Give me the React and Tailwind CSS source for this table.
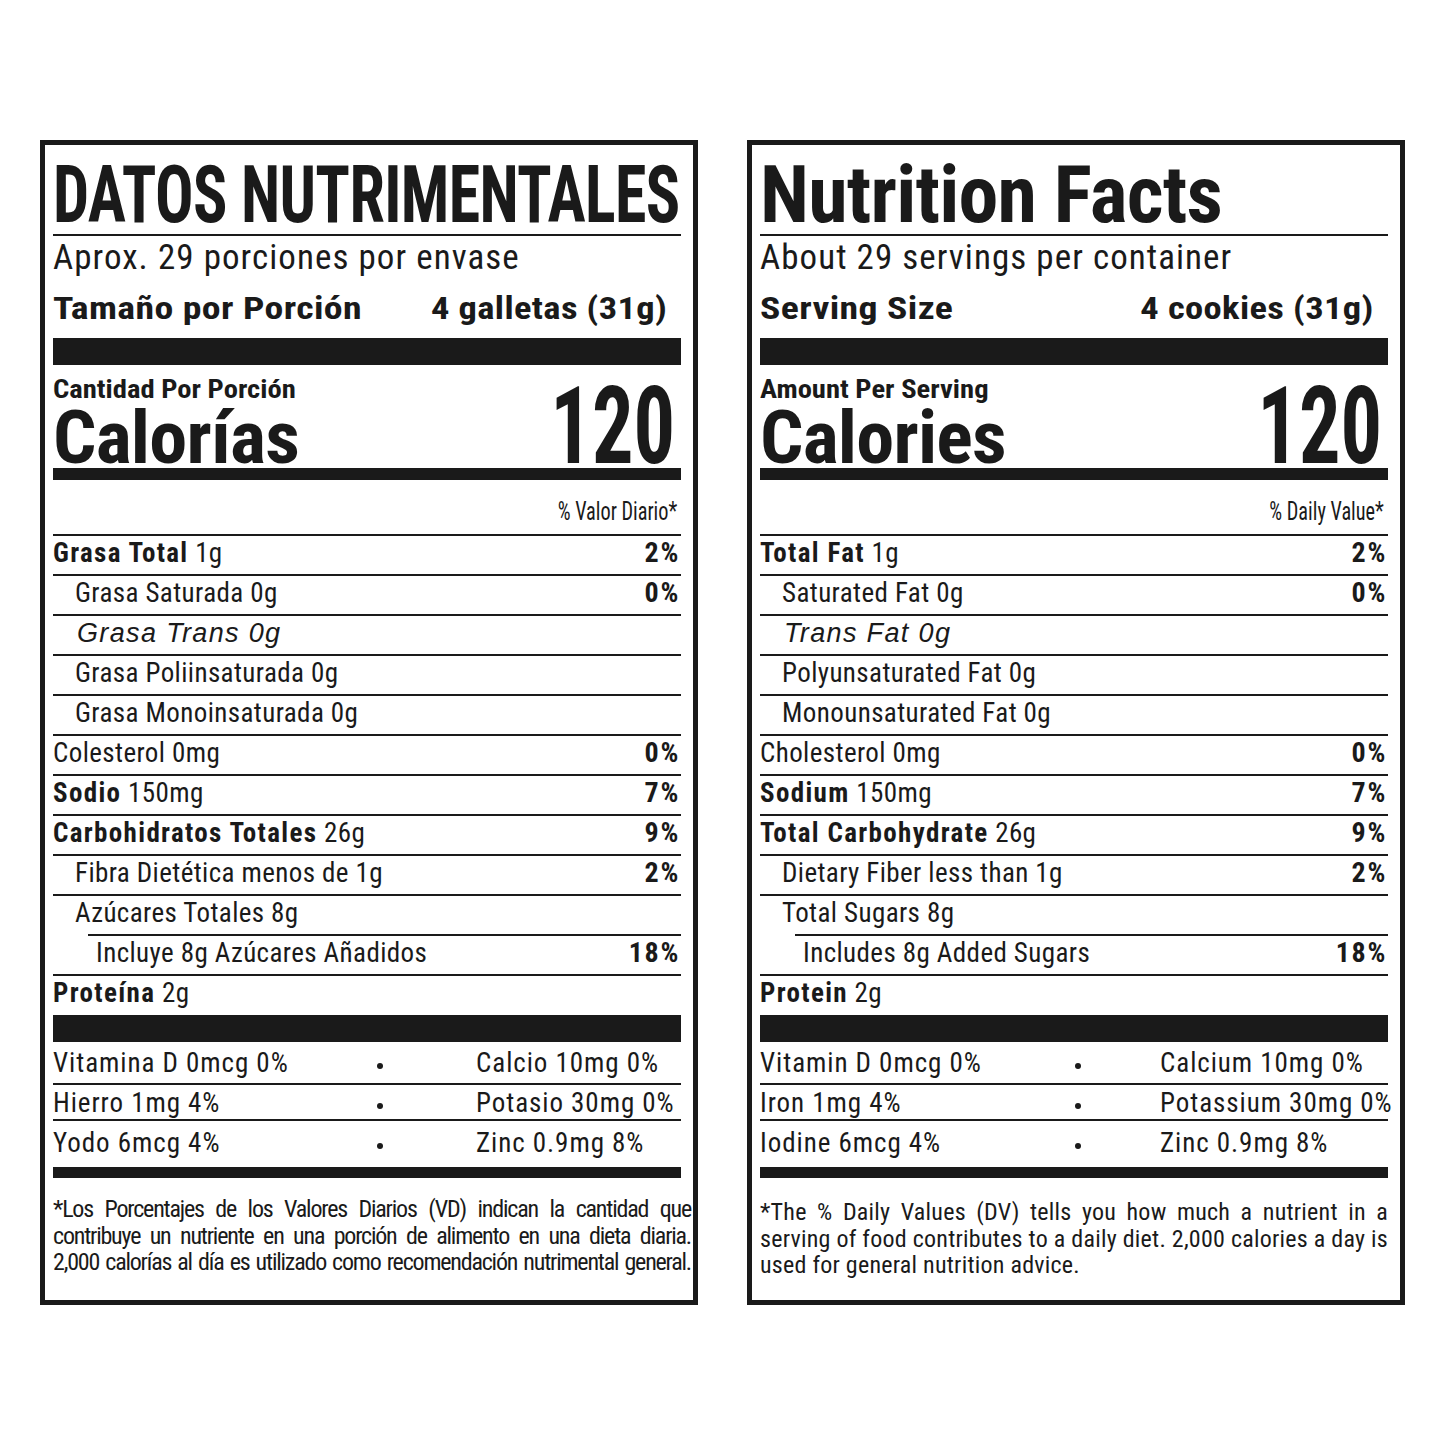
const INK = "text-[#1a1a1a]";
const RC = "font-['Roboto_Condensed',sans-serif]";

const es = {
  title: "DATOS NUTRIMENTALES",
  titleScale: "scale-x-[0.80]",
  servings: "Aprox. 29 porciones por envase",
  sizeLabel: "Tamaño por Porción",
  sizeValue: "4 galletas (31g)",
  amount: "Cantidad Por Porción",
  cal: "Calorías",
  dv: "% Valor Diario*",
  rows: [
    { b: "Grasa Total", r: " 1g", pct: "2%" },
    { r: "Grasa Saturada 0g", pct: "0%", ind: 1 },
    { r: "Grasa Trans 0g", ind: 1, it: true },
    { r: "Grasa Poliinsaturada 0g", ind: 1 },
    { r: "Grasa Monoinsaturada 0g", ind: 1 },
    { r: "Colesterol 0mg", pct: "0%" },
    { b: "Sodio", r: " 150mg", pct: "7%" },
    { b: "Carbohidratos Totales", r: " 26g", pct: "9%" },
    { r: "Fibra Dietética menos de 1g", pct: "2%", ind: 1 },
    { r: "Azúcares Totales 8g", ind: 1, lineInd: true },
    { r: "Incluye 8g Azúcares Añadidos", pct: "18%", ind: 2 },
    { b: "Proteína", r: " 2g" },
  ],
  vit: [
    ["Vitamina D 0mcg 0%", "Calcio 10mg 0%"],
    ["Hierro 1mg 4%", "Potasio 30mg 0%"],
    ["Yodo 6mcg 4%", "Zinc 0.9mg 8%"],
  ],
  colA: "w-[317px]",
  colC: "ml-[86px]",
  foot: [
    "*Los Porcentajes de los Valores Diarios (VD) indican la cantidad que",
    "contribuye un nutriente en una porción de alimento en una dieta diaria.",
    "2,000 calorías al día es utilizado como recomendación nutrimental general.",
  ],
  footLastJustify: true,
  footCls: "pt-[18px] tracking-[-0.05em] -mr-[10px]",
};

const en = {
  title: "Nutrition Facts",
  titleScale: "scale-x-100",
  servings: "About 29 servings per container",
  sizeLabel: "Serving Size",
  sizeValue: "4 cookies (31g)",
  amount: "Amount Per Serving",
  cal: "Calories",
  dv: "% Daily Value*",
  rows: [
    { b: "Total Fat", r: " 1g", pct: "2%" },
    { r: "Saturated Fat 0g", pct: "0%", ind: 1 },
    { r: "Trans Fat 0g", ind: 1, it: true },
    { r: "Polyunsaturated Fat 0g", ind: 1 },
    { r: "Monounsaturated Fat 0g", ind: 1 },
    { r: "Cholesterol 0mg", pct: "0%" },
    { b: "Sodium", r: " 150mg", pct: "7%" },
    { b: "Total Carbohydrate", r: " 26g", pct: "9%" },
    { r: "Dietary Fiber less than 1g", pct: "2%", ind: 1 },
    { r: "Total Sugars 8g", ind: 1, lineInd: true },
    { r: "Includes 8g Added Sugars", pct: "18%", ind: 2 },
    { b: "Protein", r: " 2g" },
  ],
  vit: [
    ["Vitamin D 0mcg 0%", "Calcium 10mg 0%"],
    ["Iron 1mg 4%", "Potassium 30mg 0%"],
    ["Iodine 6mcg 4%", "Zinc 0.9mg 8%"],
  ],
  colA: "w-[308px]",
  colC: "ml-[72px]",
  foot: [
    "*The % Daily Values (DV) tells you how much a nutrient in a",
    "serving of food contributes to a daily diet. 2,000 calories a day is",
    "used for general nutrition advice.",
  ],
  footLastJustify: false,
  footCls: "pt-[21px] tracking-[0.01em]",
};

function Row({ row, last }) {
  const pad = row.ind === 2 ? "pl-[43px]" : row.ind === 1 ? "pl-[22px]" : "pl-0";
  return (
    <>
      <div className={`${last ? "h-[39px]" : "h-[38px]"} flex justify-between ${pad} pr-[1px] whitespace-nowrap`}>
        {row.it ? (
          <span className="pl-[2px] font-['Liberation_Sans',sans-serif] italic text-[27px] leading-[34px] tracking-[0.05em]">{row.r}</span>
        ) : (
          <span className="text-[27px] leading-[34px] tracking-[0.015em]">
            {row.b && <b className="font-bold tracking-[0.05em]">{row.b}</b>}
            {row.r}
          </span>
        )}
        {row.pct && <span className="font-bold text-[28px] leading-[34px] tracking-[0.06em]">{row.pct}</span>}
      </div>
      {!last && <div className={`h-[2px] bg-[#1a1a1a] ${row.lineInd ? "ml-[35px]" : ""}`} />}
    </>
  );
}

function VitRow({ a, c, colA, colC, h, pt }) {
  return (
    <div className={`${h} ${pt} flex items-start text-[27px] leading-none tracking-[0.035em] whitespace-nowrap`}>
      <span className={`${colA} shrink-0`}>{a}</span>
      <span className="w-[20px] shrink-0 flex justify-center pt-[13px]">
        <span className="w-[6px] h-[6px] rounded-full bg-[#1a1a1a]" />
      </span>
      <span className={colC}>{c}</span>
    </div>
  );
}

function Panel({ d }) {
  return (
    <div className={`w-[658px] h-[1165px] border-[5px] border-[#1a1a1a] bg-white pl-[8px] pr-[12px] flex flex-col ${RC} ${INK}`}>
      {/* Title */}
      <div className="h-[89px] pt-[11px] whitespace-nowrap">
        <span className={`inline-block origin-left ${d.titleScale} font-bold text-[80px] leading-[78px] tracking-[-0.01em]`}>{d.title}</span>
      </div>
      <div className="h-[2px] bg-[#1a1a1a]" />
      {/* Servings */}
      <div className="h-[102px] flex flex-col">
        <div className="text-[35px] leading-[44px] tracking-[0.03em] whitespace-nowrap">{d.servings}</div>
        <div className="mt-[5px] flex justify-between pr-[14px] font-bold text-[32px] leading-[46px] tracking-[0.01em] whitespace-nowrap">
          <span className="inline-block origin-left scale-x-[1.18]">{d.sizeLabel}</span>
          <span className="inline-block origin-right scale-x-[1.14]">{d.sizeValue}</span>
        </div>
      </div>
      <div className="h-[27px] bg-[#1a1a1a]" />
      {/* Calories */}
      <div className="h-[103px] flex justify-between">
        <div className="pt-[12px] flex flex-col items-start whitespace-nowrap">
          <span className="inline-block origin-left scale-x-[1.1] font-bold text-[26px] leading-[24px]">{d.amount}</span>
          <span className="mt-[5px] inline-block origin-left scale-x-[1.03] font-bold text-[74px] leading-[64px] tracking-[-0.01em]">{d.cal}</span>
        </div>
        <div className="pt-[8px] pr-[6px]">
          <span className="inline-block origin-right scale-x-[0.77] font-bold text-[107px] leading-none">120</span>
        </div>
      </div>
      <div className="h-[12px] bg-[#1a1a1a]" />
      {/* DV header */}
      <div className="h-[54px] pt-[18px] pr-[4px] flex justify-end">
        <span className="inline-block origin-right scale-x-[0.78] text-[26px] leading-[26px] whitespace-nowrap">{d.dv}</span>
      </div>
      <div className="h-[2px] bg-[#1a1a1a]" />
      {/* Rows */}
      {d.rows.map((r, i) => (
        <Row key={i} row={r} last={i === d.rows.length - 1} />
      ))}
      <div className="h-[27px] bg-[#1a1a1a]" />
      {/* Vitamins */}
      <VitRow a={d.vit[0][0]} c={d.vit[0][1]} colA={d.colA} colC={d.colC} h="h-[41px]" pt="pt-[8px]" />
      <div className="h-[2px] bg-[#1a1a1a]" />
      <VitRow a={d.vit[1][0]} c={d.vit[1][1]} colA={d.colA} colC={d.colC} h="h-[34px]" pt="pt-[5px]" />
      <div className="h-[2px] bg-[#1a1a1a]" />
      <VitRow a={d.vit[2][0]} c={d.vit[2][1]} colA={d.colA} colC={d.colC} h="h-[46px]" pt="pt-[9px]" />
      <div className="h-[11px] bg-[#1a1a1a]" />
      {/* Footnote */}
      <div className={`text-[24px] leading-[26.7px] ${d.footCls}`}>
        {d.foot.map((l, i) => {
          const justify = i < d.foot.length - 1 || d.footLastJustify;
          return (
            <div key={i} className={`whitespace-nowrap ${justify ? "text-justify [text-align-last:justify]" : ""}`}>
              {l}
            </div>
          );
        })}
      </div>
    </div>
  );
}

export default function App() {
  return (
    <div className="w-[1445px] h-[1445px] bg-white pt-[140px] pl-[40px] flex items-start gap-[49px]">
      <Panel d={es} />
      <Panel d={en} />
    </div>
  );
}
